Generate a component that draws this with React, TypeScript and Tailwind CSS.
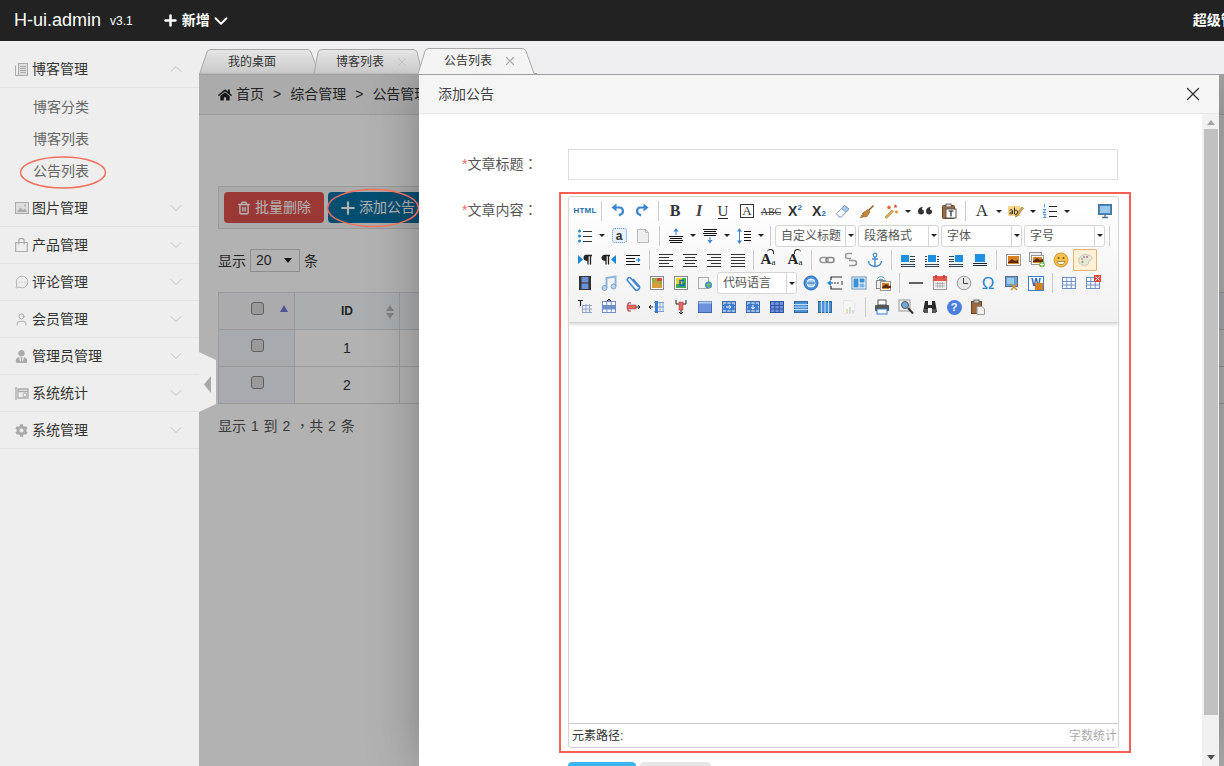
import type { ReactNode } from 'react'
import { ChevronDown, ChevronUp, MessageCircleMore, Plus, Trash2, User, X } from 'lucide-react'
import { FaCog, FaHome, FaUserTie } from 'react-icons/fa'

const S = ({ children }: { children: ReactNode }) => (
  <svg width={16} height={16} viewBox="0 0 16 16" fill="none">
    {children}
  </svg>
)

const Lines = ({ rows, c = '#333' }: { rows: number[][]; c?: string }) => (
  <>
    {rows.map(([y, a, b]) => (
      <path key={`${y}-${a}`} d={`M${a} ${y}.5H${b}`} stroke={c} />
    ))}
  </>
)

const Grid = ({ c = '#6f8fc8', bg = '#fff' }: { c?: string; bg?: string }) => (
  <>
    <rect x="1.5" y="2.5" width="13" height="11" fill={bg} stroke={c} />
    <path d="M1 6.5h14M1 10h14M5.8 2v12M10.2 2v12" stroke={c} />
  </>
)

const Pic = ({ x = 1, y = 2, w = 14, h = 11 }) => (
  <>
    <rect x={x + 0.5} y={y + 0.5} width={w} height={h} fill="#fff" stroke="#999" />
    <rect x={x + 2} y={y + 2} width={w - 3} height={h - 3} fill="#d9801e" />
    <path d={`M${x + 2} ${y + h - 3}l4-3 3 2 3-1v3h-10z`} fill="#5b2d0c" />
  </>
)

const Letter = ({ c, className }: { c: string; className: string }) => <span className={className}>{c}</span>

const blue = '#3a86d0'
const doc = '#1b87d8'

const icons: Record<string, ReactNode> = {
  html: <Letter c="HTML" className="text-[8px] font-bold tracking-[0.2px] text-[#2b6ca8] font-['Liberation_Sans',sans-serif]" />,
  undo: <S><path d="M5 4.5h4.5a3.6 3.6 0 0 1 1 7L9 12.5" stroke={blue} strokeWidth="2.2" /><path d="M6.5 .5 1.5 4.5l5 4z" fill={blue} /></S>,
  redo: <S><g transform="matrix(-1 0 0 1 16 0)"><path d="M5 4.5h4.5a3.6 3.6 0 0 1 1 7L9 12.5" stroke={blue} strokeWidth="2.2" /><path d="M6.5 .5 1.5 4.5l5 4z" fill={blue} /></g></S>,
  bold: <Letter c="B" className="text-[16px] font-bold text-[#333] font-['Liberation_Serif',serif]" />,
  italic: <Letter c="I" className="text-[16px] italic font-bold text-[#444] font-['Liberation_Serif',serif]" />,
  under: <Letter c="U" className="border-b border-[#222] text-[15px] leading-[14px] text-[#333] font-['Liberation_Serif',serif]" />,
  boxA: <Letter c="A" className="flex h-[14px] w-[14px] items-center justify-center border border-[#333] text-[13px] text-[#333] font-['Liberation_Serif',serif]" />,
  abc: <Letter c="ABC" className="text-[10px] text-[#444] line-through font-['Liberation_Serif',serif]" />,
  sup: <span className="flex items-start font-['Liberation_Sans',sans-serif] font-bold leading-none"><span className="text-[14px] text-[#333]">X</span><span className="text-[8px] text-[#2b6ca8]">2</span></span>,
  sub: <span className="flex items-end font-['Liberation_Sans',sans-serif] font-bold leading-none"><span className="text-[14px] text-[#333]">X</span><span className="text-[8px] text-[#2b6ca8]">2</span></span>,
  eraser: <S><path d="M1.5 10.5 9.5 2.5l4.5 3.5-7.5 8H4z" fill="#f4f7fb" stroke="#8a9bb0" /><path d="M9.5 2.5 14 6l-3 3.2L6.5 5.5z" fill="#a9cbea" stroke="#7b9cc0" /></S>,
  brush: <S><path d="M9 7l5-5 1 1-5 5z" fill="#8a5a20" /><path d="M9 6.5l2 2.5-3 4.5-7 1 2-1-1-1 3-1-2-1 3-2z" fill="#c58a3c" stroke="#80561f" strokeWidth=".6" /></S>,
  wand: <S><path d="M2 14 9 7l1.5 1.5-7 7z" fill="#e0b050" stroke="#8a6a20" strokeWidth=".5" /><path d="M6 2l.8 1.6 1.6.2-1.2 1.1.3 1.6L6 5.7l-1.5.8.3-1.6-1.2-1.1 1.6-.2z" fill="#e0602a" /><path d="M12.5 1l.6 1.4 1.4.2-1 1 .2 1.4-1.2-.7-1.2.7.2-1.4-1-1 1.4-.2z" fill="#d84a2a" /><circle cx="13.5" cy="9" r="1.4" fill="#e88a2a" /></S>,
  quote: <S><path d="M1 8.5C1 5.5 3.5 4 6.5 3.8 5 5 4.8 6 5 6.5c1.5.2 2 1.3 2 2.5 0 1.5-1.2 2.5-2.8 2.5C2.3 11.5 1 10.3 1 8.5zM9 8.5C9 5.5 11.5 4 14.5 3.8 13 5 12.8 6 13 6.5c1.5.2 2 1.3 2 2.5 0 1.5-1.2 2.5-2.8 2.5-1.9 0-3.2-1.2-3.2-3z" fill="#333" /></S>,
  paste: <S><rect x="1.5" y="2.5" width="12" height="13" rx="1" fill="#a0683a" stroke="#6b4422" /><rect x="5" y="1" width="5" height="3" fill="#ddd" stroke="#666" /><rect x="5" y="6" width="10" height="9" fill="#fff" stroke="#555" /><path d="M7.5 8h5M10 8v5.5" stroke="#222" strokeWidth="1.2" /></S>,
  fontA: <Letter c="A" className="text-[17px] text-[#333] font-['Liberation_Serif',serif]" />,
  hilite: <S><rect x="0" y="3" width="12" height="10" fill="#f7d68a" /><path d="M8 12 14 4l1.5 1-6 8-2 1z" fill="#e9b44c" stroke="#6b5a2a" strokeWidth=".6" /><path d="M1.5 7.5c0-1 3-1.2 3 0V11M4.5 9c-3-.5-3.5 2-1.5 2s1.5-1 1.5-1M6.5 4.5V11c1.5 1 3 0 3-2S7.500 6.500 6.500 8" stroke="#222" strokeWidth=".9" /></S>,
  ol: <S><path d="M2.5 1v3.5M1 6.5h3l-3 3h3M1 11.5h3l-1.5 1.5 1.5 1.5H1" stroke={blue} strokeWidth=".9" /><Lines rows={[[3, 7, 15], [8, 7, 15], [13, 7, 15]]} c="#222" /></S>,
  screen: <S><rect x="1.5" y="1.5" width="13" height="10" fill="#3b8bc9" stroke="#55708c" /><rect x="3" y="3" width="10" height="7" fill="#9cc7e8" /><path d="M5 14.5h6M8 12v2" stroke="#55708c" strokeWidth="1.4" /></S>,
  ul: <S><g fill={doc}><circle cx="2.5" cy="3" r="1.5" /><circle cx="2.5" cy="8" r="1.5" /><circle cx="2.5" cy="13" r="1.5" /></g><Lines rows={[[3, 6, 15], [8, 6, 15], [13, 6, 15]]} /></S>,
  selall: <span className="flex h-[15px] w-[15px] items-center justify-center rounded-[3px] border border-dotted border-[#5a8fd0] bg-[#e9f0fa] text-[12px] font-bold leading-none text-[#333] font-['Liberation_Sans',sans-serif]">a</span>,
  page: <S><path d="M2.5 1.5h8l3 3v10h-11z" fill="#eee" stroke="#bbb" /><path d="M10.5 1.5v3h3" stroke="#bbb" /></S>,
  rowTop: <S><path d="M8 0l-2.5 3.5h2V7h1V3.5h2z" fill={blue} /><Lines rows={[[8, 1, 15], [10, 2, 14], [12, 1, 15], [14, 2, 14]]} c="#111" /></S>,
  rowBot: <S><Lines rows={[[1, 1, 15], [3, 2, 14], [5, 1, 15], [7, 2, 14]]} c="#111" /><path d="M8 15.5l-2.5-3.5h2V9h1v3h2z" fill={blue} /></S>,
  lineH: <S><path d="M3.5 0 1 3.5h2v9H1L3.5 16 6 12.5H4v-9h2z" fill={blue} /><Lines rows={[[3, 8, 15], [6, 8, 15], [9, 8, 15], [12, 8, 15]]} c="#111" /></S>,
  ltr: <S><path d="M1 3v9l5-4.5z" fill={doc} /><path d="M11 3.5H9.5a2.3 2.3 0 0 0 0 4.6H11zM11 3.5v9M13.5 3.5v9M10 3.5h5" stroke="#222" strokeWidth="1.3" /><path d="M11 4v4H9.5a2 2 0 0 1 0-4z" fill="#222" /></S>,
  rtl: <S><path d="M15 3v9l-5-4.5z" fill={doc} /><path d="M5 3.5H3.5a2.3 2.3 0 0 0 0 4.6H5zM5 3.5v9M7.5 3.5v9M4 3.5h5" stroke="#222" strokeWidth="1.3" /><path d="M5 4v4H3.5a2 2 0 0 1 0-4z" fill="#222" /></S>,
  indent: <S><Lines rows={[[3, 1, 15], [6, 1, 10], [9, 1, 10], [12, 1, 15]]} c="#111" /><path d="M11 7.5h2V5.5l2.5 2.5-2.5 2.5v-2h-2z" fill={doc} /></S>,
  left: <S><Lines rows={[[2, 1, 15], [5, 1, 11], [8, 1, 15], [11, 1, 11], [14, 1, 15]]} /></S>,
  center: <S><Lines rows={[[2, 1, 15], [5, 3, 13], [8, 1, 15], [11, 3, 13], [14, 1, 15]]} /></S>,
  right: <S><Lines rows={[[2, 1, 15], [5, 5, 15], [8, 1, 15], [11, 5, 15], [14, 1, 15]]} /></S>,
  just: <S><Lines rows={[[2, 1, 15], [5, 1, 15], [8, 1, 15], [11, 1, 15], [14, 1, 15]]} /></S>,
  caseUp: <span className="relative flex items-end font-['Liberation_Serif',serif] leading-none text-[#222]"><span className="text-[15px] font-bold">A</span><span className="text-[9px]">a</span><span className="absolute -top-[3px] right-[1px] h-[5px] w-[7px] rounded-t-full border-t border-r border-[#222]" /></span>,
  caseDown: <span className="relative flex items-end font-['Liberation_Serif',serif] leading-none text-[#222]"><span className="text-[15px] font-bold">A</span><span className="text-[9px]">a</span><span className="absolute -top-[3px] right-[1px] h-[5px] w-[7px] rounded-t-full border-t border-l border-[#222]" /></span>,
  link: <S><rect x="1" y="5.5" width="8" height="5" rx="2.5" stroke="#999" strokeWidth="1.5" /><rect x="7" y="5.5" width="8" height="5" rx="2.5" stroke="#888" strokeWidth="1.5" /></S>,
  unlink: <S><path d="M9 1.5H5a2.5 2.5 0 0 0 0 5h3M6 8.5h5a2.5 2.5 0 0 1 0 5H6" stroke="#999" strokeWidth="1.5" /></S>,
  anchor: <S><circle cx="8" cy="3" r="1.8" stroke="#4a8cc8" strokeWidth="1.2" /><path d="M8 5v9.5M5 7h6M1.5 9c0 3 3 5 6.5 5.5 3.5-.5 6.5-2.500 6.500-5.500" stroke="#4a8cc8" strokeWidth="1.4" /></S>,
  imgLeft: <S><rect x="1" y="3" width="8" height="7" fill="#1e90e0" /><Lines rows={[[4, 10, 15], [7, 10, 15], [9, 10, 15], [12, 1, 15], [14, 1, 15]]} c="#345" /></S>,
  imgNone: <S><rect x="4" y="3" width="8" height="7" fill="#1e90e0" /><Lines rows={[[4, 13, 15], [7, 13, 15], [9, 13, 15], [4, 1, 3], [7, 1, 3], [9, 1, 3], [12, 1, 15], [14, 1, 15]]} c="#345" /></S>,
  imgRight: <S><rect x="7" y="3" width="8" height="7" fill="#1e90e0" /><Lines rows={[[4, 1, 6], [7, 1, 6], [9, 1, 6], [12, 1, 15], [14, 1, 15]]} c="#345" /></S>,
  imgCenter: <S><rect x="3" y="2" width="10" height="8" fill="#1e90e0" /><Lines rows={[[11, 1, 15], [13, 1, 15]]} c="#123" /></S>,
  image: <S><Pic /></S>,
  images: <S><rect x=".5" y=".5" width="12" height="9" fill="#eee" stroke="#999" /><Pic x={2} y={3} w={12} h={9} /><circle cx="13" cy="12.5" r="2.8" fill="#6cb33f" /><path d="M13 10.5v4M11 12.5h4" stroke="#fff" /></S>,
  emoji: <S><circle cx="8" cy="8" r="7" fill="#f2c14e" stroke="#d99a2b" /><circle cx="5.5" cy="6" r="1" fill="#7a4a10" /><circle cx="10.5" cy="6" r="1" fill="#7a4a10" /><path d="M4 9.5h8c-.5 2-2 3-4 3s-3.5-1-4-3z" fill="#fff" stroke="#a0651a" strokeWidth=".7" /></S>,
  palette: <S><path d="M8 2.5c4 0 7 1.5 7 3.5s-2 1.5-3 3 .5 3-2 4-7 .5-8-3 2-7.5 6-7.5z" fill="#e9e6da" stroke="#b5b09c" strokeWidth=".6" /><circle cx="5" cy="7" r="1" fill="#e0a040" /><circle cx="7" cy="5" r="1" fill="#5ca0d8" /><circle cx="5.5" cy="10" r="1" fill="#7bb04a" /><circle cx="10" cy="5" r="1" fill="#d86a5a" /></S>,
  film: <S><rect x="2" y="1" width="12" height="14" fill="#333" /><rect x="4.5" y="2" width="7" height="5.5" fill="#6c8fd8" /><rect x="4.5" y="8.5" width="7" height="5.5" fill="#6c8fd8" /></S>,
  music: <S><path d="M5.5 13V3l9-1.5V11" stroke="#8fb4dc" strokeWidth="2" /><circle cx="3.5" cy="13" r="2.5" fill="#b8d2ec" stroke="#7fa6d0" /><circle cx="12.5" cy="11.5" r="2.5" fill="#b8d2ec" stroke="#7fa6d0" /></S>,
  clip: <S><path d="M13.5 12 5.5 3a2 2 0 0 0-3 2.5l8 9.5a3 3 0 0 0 4-3.5L8 4" stroke="#4a88cf" strokeWidth="1.6" /></S>,
  map: <S><rect x="1.5" y="1.5" width="13" height="13" fill="#fff" stroke="#888" /><rect x="3" y="3" width="10" height="10" fill="#8fb04a" /><path d="M3 9l4-3 6 4v3H3z" fill="#d89a3a" /><rect x="8" y="3" width="5" height="3" fill="#d94a3a" /></S>,
  gmap: <S><rect x="1.5" y="1.5" width="13" height="13" fill="#fff" stroke="#888" /><rect x="3" y="3" width="10" height="10" fill="#3dae58" /><rect x="3" y="3" width="6" height="6" fill="#f3d030" /><path d="M11 5.5H7v5h4V8" stroke="#2060c0" strokeWidth="1.5" /></S>,
  web: <S><rect x="1.5" y="2.5" width="10" height="11" fill="#f3f3f3" stroke="#aaa" /><circle cx="11.5" cy="10" r="3.5" fill="#3b8ec9" /><path d="M9 9c2 .5 3-1 4-1.5L14 10c-1 0-2 2-2.500 3.500z" fill="#7fba52" /></S>,
  app: <S><circle cx="8" cy="8" r="7" fill="#4b8fdc" stroke="#2c68b0" /><circle cx="8" cy="8" r="4" fill="#a8d0f4" stroke="#fff" /><path d="M4 8h8" stroke="#2c68b0" /></S>,
  pagebreak: <S><path d="M4 5V2h11M4 11v3h11" stroke="#333" strokeWidth="1.2" /><path d="M4 8h9" stroke="#333" strokeDasharray="2 1" /><path d="M4 5v6L0 8z" fill={doc} /><path d="M15 6v4" stroke="#333" /></S>,
  template: <S><rect x="1" y="2" width="14" height="12" fill="#fff" stroke="#5e90b8" /><rect x="2.5" y="3.5" width="5" height="9" fill="#3a90d0" /><rect x="8.5" y="3.5" width="5" height="4" fill="#3a90d0" /><rect x="8.5" y="8.5" width="5" height="4" fill="#7ab6e0" /></S>,
  bgimg: <S><path d="M2.5 3.5c2-2.5 5-2.5 7 0M4 5c1-1 3-1 4 0" stroke="#4a90c8" /><rect x="1.5" y="5.5" width="9" height="8" fill="#eee" stroke="#888" /><Pic x={5} y={6} w={10} h={9} /></S>,
  hr: <S><path d="M1 8h14" stroke="#222" strokeWidth="1.4" /></S>,
  date: <S><rect x="1.5" y="1.5" width="13" height="13" fill="#f2f2f2" stroke="#999" /><rect x="1" y="1" width="14" height="5" fill="#e2574a" /><path d="M4 0v3M12 0v3" stroke="#a33" strokeWidth="1.4" /><path d="M3 8.5h10M3 11h10M5.5 7v6M8 7v6M10.5 7v6" stroke="#999" strokeWidth=".7" /></S>,
  clock: <S><circle cx="8" cy="8" r="6.8" fill="#e8e8e8" stroke="#999" /><path d="M7.5 3v5.5H12" stroke="#444" /></S>,
  omega: <Letter c="Ω" className="text-[17px] leading-none text-[#2d7fd0] font-['Liberation_Sans',sans-serif]" />,
  snap: <S><rect x="1.5" y="1.5" width="12" height="10" fill="#5fa5d8" stroke="#668" /><rect x="3" y="3" width="7" height="6" fill="#9cc9ea" /><path d="M7 9l6 6M13 9l-6 6" stroke="#c8933a" strokeWidth="1.6" /></S>,
  word: <span className="relative flex h-[15px] w-[16px] items-start justify-center border border-[#3d7cc9] bg-white text-[10px] font-bold leading-[11px] text-[#1f5fb0] font-['Liberation_Sans',sans-serif]">W<span className="absolute right-0 bottom-0 h-[7px] w-[8px] bg-[#d9801e]" /></span>,
  table: <S><Grid /></S>,
  delTable: <S><Grid /><rect x="9" y="0" width="7" height="7" fill="#e04a3a" /><path d="M10.5 1.5l4 4M14.5 1.5l-4 4" stroke="#fff" /></S>,
  titleRow: <S><path d="M1 1.5h5M3.5 1v6" stroke="#222" strokeWidth="1.2" /><path d="M5 6.5h10M5 10h10M5 13.5h10M9 5v9M12.5 5v9M5.5 6v8" stroke="#8fa4c8" /></S>,
  insRow: <S><path d="M8 0v4" stroke="#222" /><path d="M6 2l2-2 2 2" stroke="#222" /><Grid /><rect x="2" y="7" width="12" height="3" fill="#6f8fc8" /></S>,
  delRow: <S><path d="M3 4v8M3 4h3M3 12h3" stroke="#a33" /><rect x="2" y="6" width="9" height="4" fill="#e26a5f" stroke="#a33" strokeWidth=".5" /><path d="M11 8h4M13 6l2 2-2 2" stroke="#222" /></S>,
  insCol: <S><path d="M0 8h4M2 6 0 8l2 2" stroke="#222" /><path d="M5 3.5h10M5 8h10M5 12.5h10M11 3v10M14 3v10" stroke="#7fa0d8" /><rect x="6" y="2" width="3" height="12" fill="#3d7cd0" /></S>,
  delCol: <S><path d="M3 1v4h10V1" stroke="#222" /><rect x="6" y="3" width="4" height="8" fill="#e26a5f" stroke="#a33" strokeWidth=".5" /><path d="M8 11v4M6 13l2 2 2-2" stroke="#222" /></S>,
  merge: <S><rect x="1.5" y="2.5" width="13" height="11" fill="#6f90dc" stroke="#3d6ab0" /><rect x="1.5" y="2.5" width="13" height="2" fill="#b8cdee" /></S>,
  mergeR: <S><Grid c="#3d6ab0" bg="#9cc0ea" /><rect x="3" y="5" width="10" height="6" fill="#3d7cd0" /><path d="M5 8h5M8 6l2 2-2 2" stroke="#fff" /></S>,
  mergeD: <S><Grid c="#3d6ab0" bg="#9cc0ea" /><rect x="3" y="5" width="10" height="6" fill="#3d7cd0" /><path d="M8 6v4M6 8l2 2 2-2" stroke="#fff" /></S>,
  split: <S><Grid c="#30559c" bg="#6f90dc" /></S>,
  splitR: <S><rect x="1.5" y="2.5" width="13" height="11" fill="#4d90d8" stroke="#30689c" /><path d="M1 5.5h14M1 8h14M1 10.5h14" stroke="#c8e0f4" /></S>,
  splitC: <S><rect x="1.5" y="2.5" width="13" height="11" fill="#4d90d8" stroke="#30689c" /><path d="M4.5 2v12M8 2v12M11.5 2v12" stroke="#c8e0f4" /></S>,
  chart: <S><path d="M2.5 1.5h8l3 3v10h-11z" fill="#f6f6f6" stroke="#e6e6e6" /><rect x="5" y="10" width="2" height="4" fill="#e6d9b4" /><rect x="8" y="8" width="2" height="6" fill="#cfe0c4" /><rect x="11" y="11" width="2" height="3" fill="#d4dcea" /></S>,
  print: <S><rect x="4" y="1" width="8" height="5" fill="#fff" stroke="#555" /><rect x="1" y="6" width="14" height="6" rx="1" fill="#555" /><rect x="3" y="10" width="10" height="5" fill="#fff" stroke="#2f7fd0" /></S>,
  preview: <S><rect x="1" y="1" width="11" height="11" fill="#eee" stroke="#999" /><circle cx="7" cy="6" r="3.5" fill="#6fa8dc" stroke="#555" /><path d="M10 9l5 5.5" stroke="#333" strokeWidth="2" /></S>,
  binoc: <S><path d="M3 2h3v4h4V2h3l2 11H10V9H6v4H1z" fill="#2a2a2a" /><rect x="2" y="10" width="4" height="4" fill="#555" /><rect x="10" y="10" width="4" height="4" fill="#555" /></S>,
  help: <span className="flex h-[15px] w-[15px] items-center justify-center rounded-full bg-[#4a7fe0] text-[11px] font-bold leading-none text-white font-['Liberation_Sans',sans-serif]">?</span>,
  drafts: <S><rect x="1.5" y="2.5" width="10" height="12" fill="#a0683a" stroke="#6b4422" /><rect x="4" y="1" width="5" height="3" fill="#ccc" stroke="#666" /><path d="M7 7.5h5l2.5 2.5v5.5H7z" fill="#f3f3f3" stroke="#999" /></S>,
}

const Ic = ({ n, active = false, extra = '' }: { n: string; active?: boolean; extra?: string }) => (
  <span
    className={
      'flex h-[22px] w-6 shrink-0 items-center justify-center ' +
      (active ? 'rounded-[1px] border border-[#e8b36f] bg-[#fdf0d8] ' : '') +
      extra
    }
  >
    {icons[n]}
  </span>
)

const Caret = () => (
  <span className="flex w-[10px] shrink-0 justify-center">
    <span className="border-x-[3px] border-t-[3px] border-x-transparent border-t-[#222]" />
  </span>
)

const Sep = ({ w = 'w-[9px]' }: { w?: string }) => (
  <span className={`flex h-5 shrink-0 justify-center ${w}`}>
    <span className="h-full w-px bg-[#ccc]" />
  </span>
)

const Combo = ({ label, extra = 'w-[81px]' }: { label: string; extra?: string }) => (
  <span className={`flex h-[22px] shrink-0 rounded-[3px] border border-[#d5d5d5] bg-white ${extra}`}>
    <span className="flex-1 truncate pl-[5px] text-[12px] leading-[20px] text-[#555]">{label}</span>
    <span className="flex w-[10px] items-center justify-center border-l border-[#d5d5d5]">
      <span className="border-x-[3px] border-t-[3px] border-x-transparent border-t-[#222]" />
    </span>
  </span>
)

const row = (names: string[]) => names.map((n) => <Ic key={n} n={n} />)

const Toolbar = () => (
  <div className="h-[126px] rounded-t-[3px] border-b border-[#d4d4d4] bg-gradient-to-b from-white to-[#f1f1f1] pt-[2px] pl-1 shadow-[0_2px_3px_#ddd]">
    <div className="flex h-6 items-center">
      <Ic n="html" />
      <Sep />
      {row(['undo', 'redo'])}
      <Sep />
      {row(['bold', 'italic', 'under', 'boxA', 'abc', 'sup', 'sub', 'eraser', 'brush', 'wand'])}
      <Caret />
      {row(['quote', 'paste'])}
      <Sep />
      <Ic n="fontA" />
      <Caret />
      <Ic n="hilite" />
      <Caret />
      <Ic n="ol" />
      <Caret />
      <span className="w-[21px] shrink-0" />
      <Ic n="screen" />
    </div>
    <div className="flex h-[25px] items-center">
      <Ic n="ul" />
      <Caret />
      {row(['selall', 'page'])}
      <Sep />
      <Ic n="rowTop" />
      <Caret />
      <Ic n="rowBot" />
      <Caret />
      <Ic n="lineH" />
      <Caret />
      <Sep />
      <div className="flex gap-[2px]">
        <Combo label="自定义标题" />
        <Combo label="段落格式" />
        <Combo label="字体" />
        <Combo label="字号" />
      </div>
      <Sep />
    </div>
    <div className="flex h-[23px] items-center">
      {row(['ltr', 'rtl', 'indent'])}
      <Sep />
      {row(['left', 'center', 'right', 'just'])}
      <Sep w="w-[6px]" />
      <Ic n="caseUp" />
      <Ic n="caseDown" extra="ml-[3px]" />
      <Sep w="w-[8px]" />
      {row(['link', 'unlink', 'anchor'])}
      <Sep />
      {row(['imgLeft', 'imgNone', 'imgRight', 'imgCenter'])}
      <Sep />
      {row(['image', 'images', 'emoji'])}
      <Ic n="palette" active />
    </div>
    <div className="flex h-6 items-center">
      {row(['film', 'music', 'clip', 'map', 'gmap', 'web'])}
      <Combo label="代码语言" extra="w-[80px]" />
      <Ic n="app" extra="ml-[2px]" />
      {row(['pagebreak', 'template', 'bgimg'])}
      <Sep />
      {row(['hr', 'date', 'clock', 'omega', 'snap', 'word'])}
      <Sep />
      {row(['table', 'delTable'])}
    </div>
    <div className="flex h-6 items-center">
      {row(['titleRow', 'insRow', 'delRow', 'insCol', 'delCol', 'merge', 'mergeR', 'mergeD', 'split', 'splitR', 'splitC', 'chart'])}
      <Sep />
      {row(['print', 'preview', 'binoc', 'help', 'drafts'])}
    </div>
  </div>
)

const BlogIcon = () => (
  <svg width={13} height={13} viewBox="0 0 13 13" fill="none">
    <rect x="3.5" y=".5" width="9" height="12" fill="#ddd" stroke="#aaa" />
    <path d="M.5 2.5v10h3M5 3.5h6M5 5.5h6M5 7.5h6M5 9.5h6" stroke="#aaa" />
  </svg>
)

const PhotoIcon = () => (
  <svg width={14} height={12} viewBox="0 0 14 12" fill="none">
    <rect x=".5" y=".5" width="13" height="11" fill="#ddd" stroke="#aaa" />
    <path d="M2 10 5.5 5.5 8 8l2-1.5L12 10z" fill="#aaa" />
    <circle cx="10" cy="3.5" r="1" fill="#aaa" />
  </svg>
)

const BagIcon = () => (
  <svg width={13} height={14} viewBox="0 0 13 14" fill="none">
    <path d="M.7 4.5h11.6v9H.7zM3.8 6.5V3a2.7 2.7 0 0 1 5.4 0v3.5" stroke="#aaa" strokeWidth="1.2" />
  </svg>
)

const StatsIcon = () => (
  <svg width={14} height={13} viewBox="0 0 14 13" fill="none">
    <path d="M1 0v13M3 2h10v9H3zM3 4.500h10" stroke="#aaa" strokeWidth="1.3" />
    <circle cx="10" cy="8" r="2" stroke="#aaa" />
  </svg>
)

const menu = [
  { label: '图片管理', icon: <PhotoIcon /> },
  { label: '产品管理', icon: <BagIcon /> },
  { label: '评论管理', icon: <MessageCircleMore size={14} strokeWidth={1.5} className="text-[#aaa]" /> },
  { label: '会员管理', icon: <User size={15} strokeWidth={1.5} className="-ml-px text-[#aaa]" /> },
  { label: '管理员管理', icon: <FaUserTie size={13} className="text-[#aaa]" /> },
  { label: '系统统计', icon: <StatsIcon /> },
  { label: '系统管理', icon: <FaCog size={13} className="text-[#aaa]" /> },
]

const Sidebar = () => (
  <aside className="w-[199px] shrink-0 bg-[#eeeeee] pt-[9px] text-[14px] text-[#333]">
    <div className="flex h-[38px] items-center border-b border-[#e3e3e3] pt-px pr-[13px] pl-[15px]">
      <span className="flex w-[17px] shrink-0"><BlogIcon /></span>
      <span className="flex-1">博客管理</span>
      <ChevronUp size={20} strokeWidth={1} className="text-[#bbb]" />
    </div>
    <ul className="pt-[3px] pb-[3px] pl-[33px] text-[#666]">
      <li className="h-8 leading-[32px]">博客分类</li>
      <li className="h-8 leading-[32px]">博客列表</li>
      <li className="h-8 leading-[32px]">公告列表</li>
    </ul>
    {menu.map((m) => (
      <div key={m.label} className="flex h-[37px] items-center border-b border-[#e3e3e3] pr-[13px] pl-[15px]">
        <span className="flex w-[17px] shrink-0">{m.icon}</span>
        <span className="flex-1">{m.label}</span>
        <ChevronDown size={20} strokeWidth={1} className="text-[#bbb]" />
      </div>
    ))}
  </aside>
)

const tabShape = 'absolute inset-0 h-full w-full'

const Tabs = () => (
  <div className="flex h-[34px] shrink-0 items-end border-b border-[#9d9d9d] bg-[#efeff1] text-[12px] text-[#333]">
    <div className="relative z-[1] flex h-[25px] w-[121px] shrink-0 items-center pl-[29px]">
      <svg className={tabShape} viewBox="0 0 121 25" preserveAspectRatio="none">
        <defs>
          <linearGradient id="off" x1="0" y1="0" x2="0" y2="1">
            <stop offset="0" stopColor="#e6e6e6" />
            <stop offset="1" stopColor="#c8c8c8" />
          </linearGradient>
        </defs>
        <path d="M.5 25 8 3Q9 .5 12 .5H108Q111 .5 112 3L120 25z" fill="url(#off)" stroke="#a8a8a8" />
      </svg>
      <span className="relative">我的桌面</span>
    </div>
    <div className="relative z-[1] -ml-[7px] flex h-[25px] w-[110px] shrink-0 items-center pl-[23px]">
      <svg className={tabShape} viewBox="0 0 110 25" preserveAspectRatio="none">
        <path d="M1 25 5 3Q6 .5 9 .5H100Q103 .5 104 3L109.5 25z" fill="url(#off)" stroke="#a8a8a8" />
      </svg>
      <span className="relative">博客列表</span>
      <X size={14} strokeWidth={1.5} className="relative ml-[11px] text-[#bbb]" />
    </div>
    <div className="relative z-[2] -ml-[5px] flex h-[26px] w-[119px] shrink-0 items-center pl-[26px]">
      <svg className={tabShape} viewBox="0 0 119 26" preserveAspectRatio="none">
        <path d="M0 26 7 3Q8 .5 11 .5H104Q107 .5 108 3L116 25.5H119" fill="#f4f4f4" stroke="#a8a8a8" />
      </svg>
      <span className="relative">公告列表</span>
      <X size={14} strokeWidth={2} className="relative ml-[11px] text-[#aaa]" />
    </div>
  </div>
)

const Page = () => (
  <div className="bg-white pl-[19px] text-[14px] text-[#333]">
    <div className="-ml-[19px] flex h-10 items-center gap-[9px] border-b border-[#ddd] bg-[#f5f5f5] pl-[19px]">
      <FaHome size={14} className="text-[#222]" />
      <span className="-ml-[5px]">首页</span>
      <span>&gt;</span>
      <span>综合管理</span>
      <span>&gt;</span>
      <span>公告管理</span>
    </div>
    <div className="mt-[71px] flex h-[43px] w-[988px] items-center gap-1 border border-[#ddd] bg-[#f5f5f5] pl-[5px]">
      <button className="flex h-[31px] w-[100px] items-center gap-1 rounded-[4px] bg-[#dd514c] pl-[13px] text-white">
        <Trash2 size={14} strokeWidth={2.5} />
        批量删除
      </button>
      <button className="flex h-[31px] w-[100px] items-center gap-px rounded-[4px] bg-[#0770a3] pl-[10px] text-white">
        <Plus size={20} strokeWidth={2.5} />
        添加公告
      </button>
    </div>
    <div className="mt-5 flex h-[23px] items-center gap-1">
      <span className="pt-[2px]">显示</span>
      <span className="flex h-[23px] w-[50px] items-center justify-between border border-[#ccc] px-[5px]">
        <span>20</span>
        <span className="mr-[2px] border-x-[4px] border-t-[5px] border-x-transparent border-t-[#222]" />
      </span>
      <span className="pt-[2px]">条</span>
    </div>
    <table className="mt-5 w-[1010px] table-fixed border-collapse text-center">
      <thead>
        <tr className="h-[37px] bg-[#f5fafe]">
          <th className="relative w-[76px] border border-[#ddd] bg-[#f5f5fa]">
            <span className="absolute top-[9px] left-[32px] h-[13px] w-[13px] rounded-[3px] border border-[#888] bg-[#ddd]" />
            <span className="absolute top-[12px] right-[6px] border-x-[4px] border-b-[7px] border-x-transparent border-b-[#7878d8]" />
          </th>
          <th className="relative w-[105px] border border-[#ddd] text-[12px] font-bold">
            ID
            <span className="absolute top-[12px] right-[5px] border-x-[4px] border-b-[6px] border-x-transparent border-b-[#bbb]" />
            <span className="absolute top-[20px] right-[5px] border-x-[4px] border-t-[6px] border-x-transparent border-t-[#bbb]" />
          </th>
          <th className="border border-[#ddd]" />
        </tr>
      </thead>
      <tbody>
        {[1, 2].map((i) => (
          <tr key={i} className="h-[37px]">
            <td className="relative border border-[#ddd] bg-[#f0f4fa]">
              <span className="absolute top-[9px] left-[32px] h-[13px] w-[13px] rounded-[3px] border border-[#888] bg-[#ddd]" />
            </td>
            <td className="border border-[#ddd]">{i}</td>
            <td className="border border-[#ddd]" />
          </tr>
        ))}
      </tbody>
    </table>
    <p className="mt-[11px] text-[#555] [word-spacing:1px]">
      显示 1 到 2 <span className="font-['Noto_Sans_CJK_TC',sans-serif]">，</span>共 2 条
    </p>
  </div>
)

const Modal = () => (
  <div className="absolute top-0 bottom-0 left-[220px] flex w-[800px] flex-col bg-[#f5f5f5] text-[14px] text-[#333] shadow-[1px_1px_50px_rgba(0,0,0,0.3)]">
    <div className="flex h-[39px] shrink-0 items-center justify-between border-b border-[#e8e8e8] pr-[15px] pl-[19px]">
      <span className="text-[#444]">添加公告</span>
      <X size={22} strokeWidth={1.4} className="text-[#333]" />
    </div>
    <div className="flex min-h-0 flex-1">
      <div className="flex-1 overflow-hidden bg-white pt-[35px] pl-[43px]">
        <div className="flex">
          <label className="w-[106px] shrink-0 pt-1 text-[#555]">
            <span className="text-[#f66]">*</span>文章标题<span className="font-['Noto_Sans_CJK_TC',sans-serif]">：</span>
          </label>
          <div className="h-[31px] w-[550px] border border-[#ddd]" />
        </div>
        <div className="mt-[16px] flex">
          <label className="w-[106px] shrink-0 pt-[3px] text-[#555]">
            <span className="text-[#f66]">*</span>文章内容<span className="font-['Noto_Sans_CJK_TC',sans-serif]">：</span>
          </label>
          <div className="relative">
            <div className="flex h-[552px] w-[551px] flex-col rounded-[3px] border border-[#d4d4d4]">
              <Toolbar />
              <div className="flex-1" />
              <div className="flex h-[24px] items-center justify-between border-t border-[#ccc] pr-[1px] pl-[3px] text-[12px]">
                <span className="text-[#333]">元素路径:</span>
                <span className="text-[#aaa]">字数统计</span>
              </div>
            </div>
            <div className="pointer-events-none absolute -top-[4px] -left-[9px] h-[561px] w-[572px] border-2 border-[#f95f53]" />
          </div>
        </div>
        <div className="mt-[14px] ml-[106px] flex gap-1">
          <button aria-label="确定" className="h-[30px] w-[68px] rounded-t-[4px] bg-[#3bb4f2]" />
          <button aria-label="取消" className="h-[30px] w-[71px] rounded-t-[4px] bg-[#e6e6e6]" />
        </div>
      </div>
      <div className="flex w-[17px] shrink-0 flex-col items-center bg-[#f1f1f1]">
        <span className="mt-[6px] mb-[4px] border-x-[4px] border-b-[5px] border-x-transparent border-b-[#a3a3a3]" />
        <div className="h-[586px] w-[14px] bg-[#c1c1c1]" />
        <span className="mt-[40px] border-x-[4px] border-t-[5px] border-x-transparent border-t-[#505050]" />
      </div>
    </div>
  </div>
)

export default function App() {
  return (
    <div className="relative flex h-[766px] w-[1224px] flex-col overflow-hidden bg-white font-['Liberation_Sans','Noto_Sans_CJK_SC',sans-serif]">
      <header className="flex h-[41px] shrink-0 items-center overflow-hidden bg-[#222222] pl-[14px] text-white">
        <span className="shrink-0 text-[18px] whitespace-nowrap">H-ui.admin</span>
        <span className="ml-[9px] shrink-0 text-[12px]">v3.1</span>
        <Plus size={17} strokeWidth={3.5} className="ml-[29px] shrink-0" />
        <span className="ml-[3px] shrink-0 text-[14px] font-bold whitespace-nowrap">新增</span>
        <ChevronDown size={22} strokeWidth={2} className="shrink-0" />
        <span className="ml-[961px] shrink-0 text-[14px] font-bold whitespace-nowrap">超级管理员</span>
      </header>
      <div className="relative flex min-h-0 flex-1">
        <Sidebar />
        <main className="flex min-w-0 flex-1 flex-col">
          <Tabs />
          <div className="relative flex-1 overflow-hidden">
            <Page />
            <div className="absolute inset-0 bg-black/30" />
            <Modal />
          </div>
        </main>
        <svg className="absolute top-[311px] left-[199px]" width={18} height={60} viewBox="0 0 18 60">
          <path d="M0 0 17 8V52L0 60z" fill="#eeeeee" />
          <path d="M12 24V41L5 32.5z" fill="#a8a8a8" />
        </svg>
      </div>
      <svg className="absolute top-[156px] left-[19px]" width={88} height={33} viewBox="0 0 88 33" fill="none">
        <ellipse cx="44" cy="16.5" rx="42.5" ry="15.5" stroke="#f4705e" strokeWidth="1.5" />
      </svg>
      <svg className="absolute top-[188px] left-[326px]" width={94} height={40} viewBox="0 0 94 40" fill="none">
        <ellipse cx="47" cy="20" rx="45.5" ry="18.5" stroke="#f4705e" strokeWidth="1.5" />
      </svg>
    </div>
  )
}
